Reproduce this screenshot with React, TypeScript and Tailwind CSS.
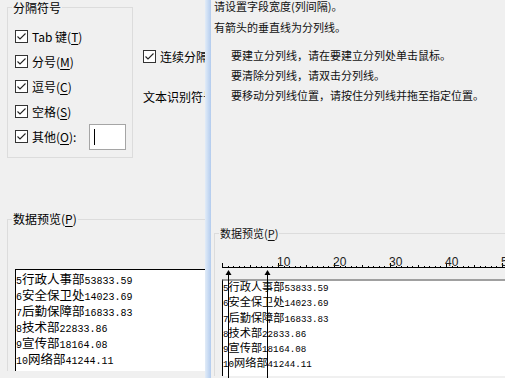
import React from 'react';

const rows: [string, string, string][] = [
  ['5', '行政人事部', '53833.59'],
  ['6', '安全保卫处', '14023.69'],
  ['7', '后勤保障部', '16833.83'],
  ['8', '技术部', '22833.86'],
  ['9', '宣传部', '18164.08'],
  ['10', '网络部', '41244.11'],
];

const options = [
  { label: 'Tab 键', key: 'T' },
  { label: '分号', key: 'M' },
  { label: '逗号', key: 'C' },
  { label: '空格', key: 'S' },
];

function CheckBox() {
  return (
    <svg width="13" height="13" viewBox="0 0 13 13" className="shrink-0">
      <rect x="0.5" y="0.5" width="12" height="12" fill="#fff" stroke="#333" />
      <path d="M2.5 6.5 5 9 10.5 3.5" fill="none" stroke="#222" strokeWidth="1.1" />
    </svg>
  );
}

function Ruler() {
  const ticks = [];
  for (let i = 0; i <= 50; i++) {
    const x = Math.round(i * 5.6) + 0.5;
    const top = i % 10 === 0 ? 23 : i % 5 === 0 ? 25 : 26;
    ticks.push(<line key={i} x1={x} x2={x} y1={top} y2={28} stroke="#000" />);
  }
  return (
    <svg width="283" height="39" className="block">
      <line x1="0" x2="283" y1="27.5" y2="27.5" stroke="#000" />
      {ticks}
      {[10, 20, 30, 40, 50].map((n) => (
        <text
          key={n}
          x={Math.round(n * 5.6) - 1}
          y="26"
          fontSize="12"
          fontFamily="Liberation Sans, sans-serif"
          fill="#222"
        >
          {n}
        </text>
      ))}
    </svg>
  );
}

export default function App() {
  return (
    <div className="flex h-[378px] w-[505px] overflow-hidden bg-[#f0f0f0] text-black font-['Noto_Sans_CJK_SC',sans-serif]">
      {/* Back dialog: delimiters step */}
      <div className="h-full w-[205px] shrink-0 overflow-hidden text-[12px]">
        <div className="flex">
          <fieldset className="ml-[7px] h-[158px] w-[126px] shrink-0 border border-[#dcdcdc] p-0">
            <legend className="ml-[4px] px-[1px] leading-[15px]">分隔符号</legend>
            <div className="flex flex-col pl-[7px] pt-[9px]">
              {options.map((o) => (
                <div key={o.key} className="flex h-[25px] items-center gap-[4px] whitespace-nowrap">
                  <CheckBox />
                  <span>
                    {o.label}(<u className="underline-offset-2">{o.key}</u>)
                  </span>
                </div>
              ))}
              <div className="flex h-[25px] items-center gap-[4px] whitespace-nowrap">
                <CheckBox />
                <span className="w-[53px]">
                  其他(<u className="underline-offset-2">O</u>):
                </span>
                <div className="h-[26px] w-[37px] shrink-0 border border-[#a5a5a5] bg-white pl-[4px] pt-[4px]">
                  <div className="h-[16px] w-px bg-black" />
                </div>
              </div>
            </div>
          </fieldset>
          <div className="ml-[10px] flex flex-col whitespace-nowrap">
            <div className="mt-[44px] flex h-[25px] items-center gap-[4px]">
              <CheckBox />
              <span>连续分隔符号视为单个处理(R)</span>
            </div>
            <div className="mt-[20px] leading-[15px]">文本识别符号(Q):</div>
          </div>
        </div>

        <fieldset className="ml-[7px] mt-[53px] w-[260px] border-0 border-l border-t border-[#dcdcdc] p-0">
          <legend className="ml-[4px] px-[1px] leading-[16px]">
            数据预览(<u className="underline-offset-2">P</u>)
          </legend>
          <div className="ml-[7px] mt-[42px] h-[102px] border-l border-t border-black bg-white pt-[1px]">
            {rows.map(([a, b, c]) => (
              <div key={a} className="h-[16px] whitespace-nowrap leading-[16px]">
                <span className="font-['Liberation_Mono',monospace] text-[10px]">{a}</span>
                <span className="text-[12.5px]">{b}</span>
                <span className="font-['Liberation_Mono',monospace] text-[10px]">{c}</span>
              </div>
            ))}
          </div>
        </fieldset>
      </div>

      {/* Front dialog edge */}
      <div className="h-full w-[6px] shrink-0 bg-linear-to-r from-[#e2ecf8] to-[#b3ccee]" />

      {/* Front dialog: column widths step */}
      <div className="h-full min-w-0 flex-1 overflow-hidden text-[11px] text-[#111]">
        <div className="-mt-[4px] whitespace-nowrap pl-[3px] leading-[21px]">
          <div>请设置字段宽度(列间隔)。</div>
          <div>有箭头的垂直线为分列线。</div>
        </div>
        <div className="mt-[7px] whitespace-nowrap pl-[20px] leading-[20px]">
          <div>要建立分列线，请在要建立分列处单击鼠标。</div>
          <div>要清除分列线，请双击分列线。</div>
          <div>要移动分列线位置，请按住分列线并拖至指定位置。</div>
        </div>

        <fieldset className="ml-[3px] mt-[121px] w-[320px] border-0 border-l border-t border-[#dcdcdc] p-0">
          <legend className="ml-[4px] px-[1px] leading-[14px]">
            数据预览(<u className="underline-offset-2">P</u>)
          </legend>
          <div className="relative ml-[7px]">
            <Ruler />
            <div className="h-[97px] border-l border-t-2 border-l-black border-t-[#a0a0a0] bg-white">
              <div className="-mt-[2px] text-black">
                {rows.map(([a, b, c]) => (
                  <div key={a} className="h-[15.3px] whitespace-nowrap leading-[15.3px]">
                    <span className="font-['Liberation_Mono',monospace] text-[9.2px]">{a}</span>
                    <span className="text-[11.2px]">{b}</span>
                    <span className="font-['Liberation_Mono',monospace] text-[9.2px]">{c}</span>
                  </div>
                ))}
              </div>
            </div>
            {/* column break arrows lie over the preview */}
            <svg width="60" height="110" className="pointer-events-none absolute left-0 top-[30px]">
              {[6.5, 45.5].map((x) => (
                <g key={x}>
                  <polygon points={`${x - 3},5 ${x},0 ${x + 3},5`} fill="#000" />
                  <line x1={x} x2={x} y1="4" y2="110" stroke="#000" />
                </g>
              ))}
            </svg>
          </div>
        </fieldset>
      </div>
    </div>
  );
}
